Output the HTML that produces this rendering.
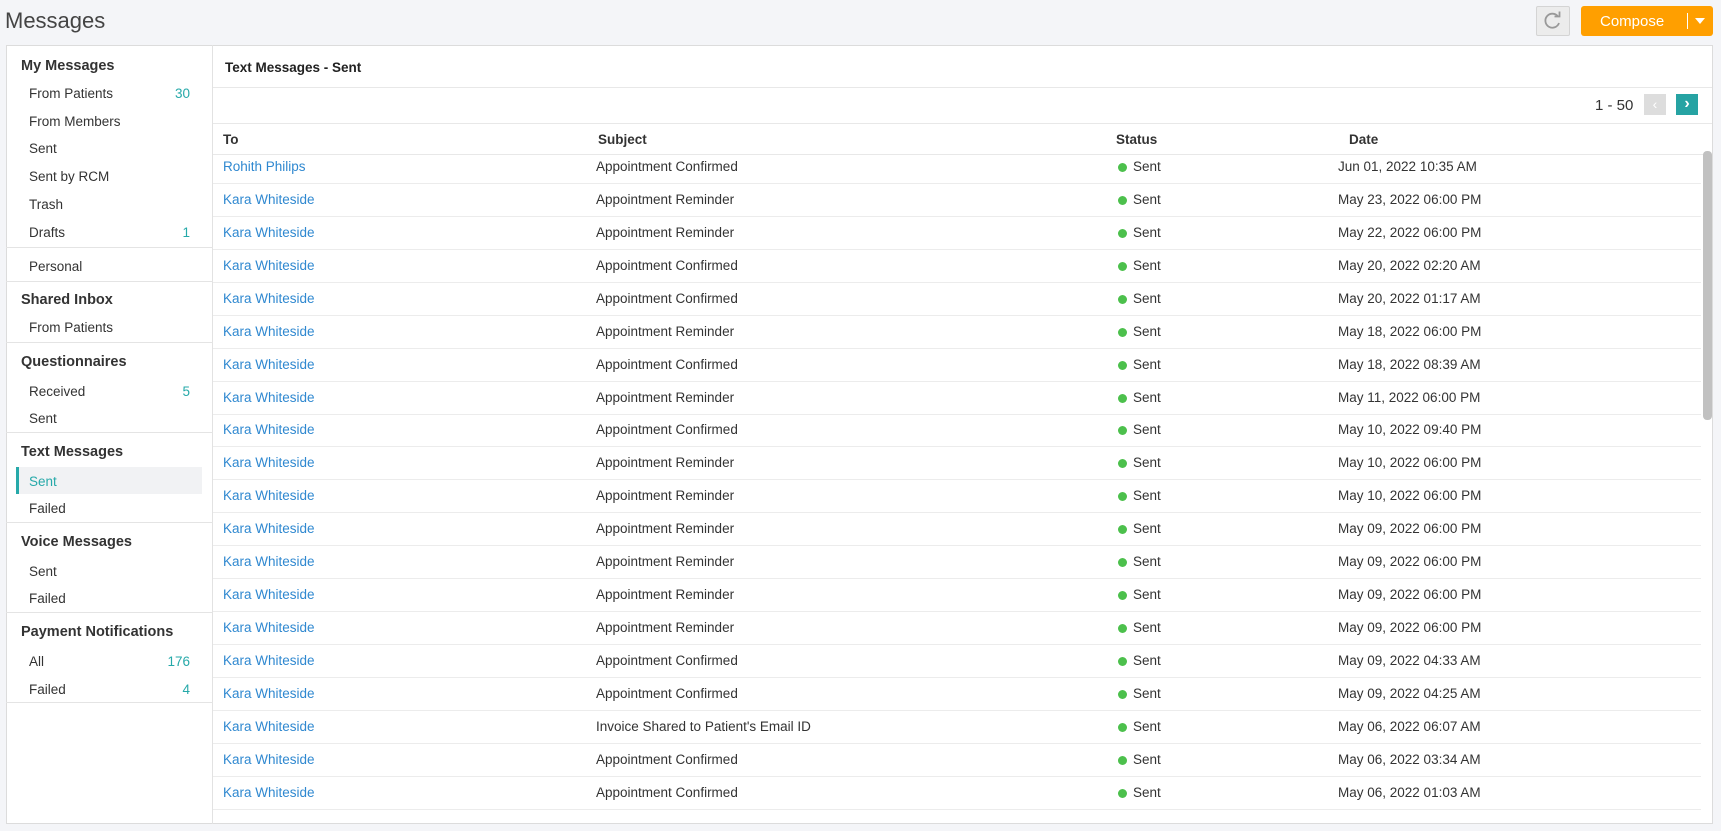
<!DOCTYPE html>
<html><head><meta charset="utf-8"><style>
*{box-sizing:border-box;margin:0;padding:0}
body{width:1721px;height:831px;background:#f4f5f8;font-family:"Liberation Sans",sans-serif;color:#333;position:relative;overflow:hidden;font-size:13.5px}
.a{position:absolute;white-space:nowrap}
.title{left:5px;top:8px;font-size:22px;color:#444}
.refresh{left:1536px;top:6px;width:34px;height:30px;border:1px solid #d4d4d4;background:#ececec;border-radius:2px}
.compose{left:1581px;top:6px;width:132px;height:30px;background:#ff9f00;border-radius:3px;color:#fff;font-size:15px}
.panel{left:6px;top:45px;width:1707px;height:779px;background:#fff;border:1px solid #dcdcdc}
.side{left:6px;top:45px;width:207px;height:779px;border-right:1px solid #e2e2e2}
.h{font-weight:bold;font-size:14.5px;color:#333;left:21px}
.i{left:29px;font-size:13.5px;color:#333}
.c{right:1531px;font-size:13.5px;color:#26a9a9;text-align:right}
.sep{left:6px;width:207px;height:1px;background:#e4e4e4}
.hl{height:1px;background:#e8e8e8;left:213px;width:1499px}
.rl{height:1px;background:#ececec;left:213px;width:1488px}
.to{left:223px;color:#2f88d0}
.sub{left:596px}
.st{left:1133px}
.dot{left:1118px;width:9px;height:9px;border-radius:50%;background:#4cc04c}
.dt{left:1338px}
.th{font-weight:bold;font-size:13.5px;top:132px}
</style></head><body>
<div class="a title">Messages</div>
<div class="a refresh"><svg width="32" height="28" viewBox="0 0 32 28"><path d="M21 9.5 A7 7 0 1 0 22 16" fill="none" stroke="#999" stroke-width="1.8"/><path d="M17.5 9.5 L22.5 9.5 L22.5 4.5" fill="none" stroke="#999" stroke-width="1.8"/></svg></div>
<div class="a compose"><span class="a" style="left:19px;top:7px">Compose</span><span class="a" style="left:106px;top:7px;width:1px;height:16px;background:#fff"></span><span class="a" style="left:114px;top:12px;border:5px solid transparent;border-top:6px solid #fff;border-bottom:0"></span></div>
<div class="a panel"></div>
<div class="a side"></div>
<div class="a h" style="top:58px">My Messages</div>
<div class="a i" style="top:86px">From Patients</div><div class="a c" style="top:86px">30</div>
<div class="a i" style="top:114px">From Members</div>
<div class="a i" style="top:141px">Sent</div>
<div class="a i" style="top:169px">Sent by RCM</div>
<div class="a i" style="top:197px">Trash</div>
<div class="a i" style="top:225px">Drafts</div><div class="a c" style="top:225px">1</div>
<div class="a sep" style="top:247px"></div>
<div class="a i" style="top:259px">Personal</div>
<div class="a sep" style="top:281px"></div>
<div class="a h" style="top:292px">Shared Inbox</div>
<div class="a i" style="top:320px">From Patients</div>
<div class="a sep" style="top:342px"></div>
<div class="a h" style="top:354px">Questionnaires</div>
<div class="a i" style="top:384px">Received</div><div class="a c" style="top:384px">5</div>
<div class="a i" style="top:411px">Sent</div>
<div class="a sep" style="top:432px"></div>
<div class="a h" style="top:444px">Text Messages</div>
<div class="a" style="left:16px;top:467px;width:186px;height:27px;background:#f1f2f4;border-left:3px solid #26a9a9"></div>
<div class="a i" style="top:474px;color:#26a9a9">Sent</div>
<div class="a i" style="top:501px">Failed</div>
<div class="a sep" style="top:522px"></div>
<div class="a h" style="top:534px">Voice Messages</div>
<div class="a i" style="top:564px">Sent</div>
<div class="a i" style="top:591px">Failed</div>
<div class="a sep" style="top:612px"></div>
<div class="a h" style="top:624px">Payment Notifications</div>
<div class="a i" style="top:654px">All</div><div class="a c" style="top:654px">176</div>
<div class="a i" style="top:682px">Failed</div><div class="a c" style="top:682px">4</div>
<div class="a sep" style="top:702px"></div>

<div class="a" style="left:225px;top:60px;font-weight:bold;font-size:13.5px;color:#222">Text Messages - Sent</div>
<div class="a hl" style="top:87px"></div>
<div class="a" style="left:1595px;top:97px;font-size:15px;color:#333">1 - 50</div>
<div class="a" style="left:1644px;top:94px;width:22px;height:21px;background:#ddd;color:#fff;text-align:center;font-size:14px;line-height:20px">&#8249;</div>
<div class="a" style="left:1676px;top:94px;width:22px;height:21px;background:#26a3a3;color:#fff;text-align:center;font-size:16px;line-height:20px;font-weight:bold">&#8250;</div>
<div class="a hl" style="top:123px"></div>
<div class="a th" style="left:223px">To</div>
<div class="a th" style="left:598px">Subject</div>
<div class="a th" style="left:1116px">Status</div>
<div class="a th" style="left:1349px">Date</div>
<div class="a hl" style="top:154px"></div>
<div class="a" style="left:1703px;top:151px;width:9px;height:269px;background:#c1c1c1;border-radius:4px"></div>
<div id="rows"></div>
<script>
var d=[["Rohith Philips","Appointment Confirmed","Jun 01, 2022 10:35 AM"],
["Kara Whiteside","Appointment Reminder","May 23, 2022 06:00 PM"],
["Kara Whiteside","Appointment Reminder","May 22, 2022 06:00 PM"],
["Kara Whiteside","Appointment Confirmed","May 20, 2022 02:20 AM"],
["Kara Whiteside","Appointment Confirmed","May 20, 2022 01:17 AM"],
["Kara Whiteside","Appointment Reminder","May 18, 2022 06:00 PM"],
["Kara Whiteside","Appointment Confirmed","May 18, 2022 08:39 AM"],
["Kara Whiteside","Appointment Reminder","May 11, 2022 06:00 PM"],
["Kara Whiteside","Appointment Confirmed","May 10, 2022 09:40 PM"],
["Kara Whiteside","Appointment Reminder","May 10, 2022 06:00 PM"],
["Kara Whiteside","Appointment Reminder","May 10, 2022 06:00 PM"],
["Kara Whiteside","Appointment Reminder","May 09, 2022 06:00 PM"],
["Kara Whiteside","Appointment Reminder","May 09, 2022 06:00 PM"],
["Kara Whiteside","Appointment Reminder","May 09, 2022 06:00 PM"],
["Kara Whiteside","Appointment Reminder","May 09, 2022 06:00 PM"],
["Kara Whiteside","Appointment Confirmed","May 09, 2022 04:33 AM"],
["Kara Whiteside","Appointment Confirmed","May 09, 2022 04:25 AM"],
["Kara Whiteside","Invoice Shared to Patient's Email ID","May 06, 2022 06:07 AM"],
["Kara Whiteside","Appointment Confirmed","May 06, 2022 03:34 AM"],
["Kara Whiteside","Appointment Confirmed","May 06, 2022 01:03 AM"]];
var h="";
for(var k=0;k<d.length;k++){var c=167+k*32.93;var t=c-8;
h+='<div class="a to" style="top:'+t+'px">'+d[k][0]+'</div><div class="a sub" style="top:'+t+'px">'+d[k][1]+'</div><div class="a dot" style="top:'+(c-4)+'px"></div><div class="a st" style="top:'+t+'px">Sent</div><div class="a dt" style="top:'+t+'px">'+d[k][2]+'</div><div class="a rl" style="top:'+Math.round(c+16)+'px"></div>';}
document.getElementById("rows").innerHTML=h;
</script>
</body></html>
